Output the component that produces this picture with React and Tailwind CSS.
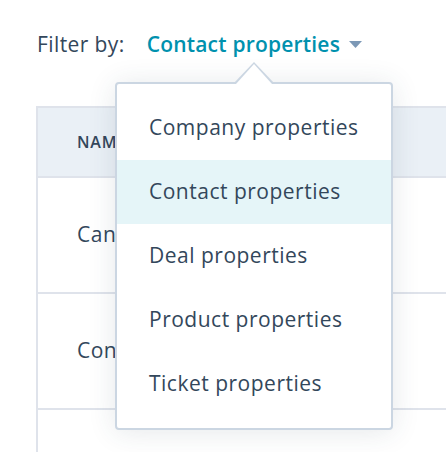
import React from "react";

const items = [
  "Company properties",
  "Contact properties",
  "Deal properties",
  "Product properties",
  "Ticket properties",
];

export default function App() {
  return (
    <div
      className="relative w-[446px] h-[452px] overflow-hidden bg-white text-[#33475b]"
      style={{ fontFamily: "'Open Sans', 'Noto Sans', sans-serif" }}
    >
      <div className="flex items-center pl-[37px] pt-[28px] h-[60px]">
        <span className="text-[21px] leading-[28px] tracking-[0.4px]">Filter by:</span>
        <span className="ml-[22px] text-[21px] leading-[28px] font-semibold tracking-[0.2px] text-[#0091ae]">
          Contact properties
        </span>
        <svg width="13" height="7" viewBox="0 0 13 7" className="ml-[9px] mt-[1px]">
          <path d="M0 0 L13 0 L6.5 7 Z" fill="#7c98b6" />
        </svg>
      </div>

      <div className="ml-[36px] mt-[46px] flex flex-col border-l-2 border-t-2 border-[#dfe3eb]">
        <div className="h-[70px] bg-[#eaf0f6] border-b-2 border-[#dfe3eb] flex items-center pl-[39px] text-[16px] font-semibold tracking-[0.8px]">
          NAME
        </div>
        <div className="h-[116px] border-b-2 border-[#dfe3eb] flex items-center pl-[39px] text-[21px] tracking-[0.5px]">
          Candidate
        </div>
        <div className="h-[116px] border-b-2 border-[#dfe3eb] flex items-center pl-[39px] text-[21px] tracking-[0.5px]">
          Contact
        </div>
        <div className="h-[60px]" />
      </div>

      <div className="absolute left-[115px] top-[82px] w-[278px]">
        <div className="absolute left-[119px] -top-[20px] w-0 h-0 border-l-[20px] border-r-[20px] border-b-[21px] border-l-transparent border-r-transparent border-b-[#cbd6e2]" />
        <div className="absolute left-[121px] -top-[18px] w-0 h-0 border-l-[18px] border-r-[18px] border-b-[20px] border-l-transparent border-r-transparent border-b-white z-10" />
        <div className="flex flex-col bg-white border-2 border-[#cbd6e2] rounded-[4px] shadow-[0_2px_28px_rgba(45,62,80,0.12)] py-[12px]">
          {items.map((t, i) => (
            <div
              key={t}
              className={`h-[64px] flex items-center pl-[32px] text-[21px] tracking-[0.5px] ${
                i === 1 ? "bg-[#e5f5f8]" : ""
              }`}
            >
              {t}
            </div>
          ))}
        </div>
      </div>
    </div>
  );
}
